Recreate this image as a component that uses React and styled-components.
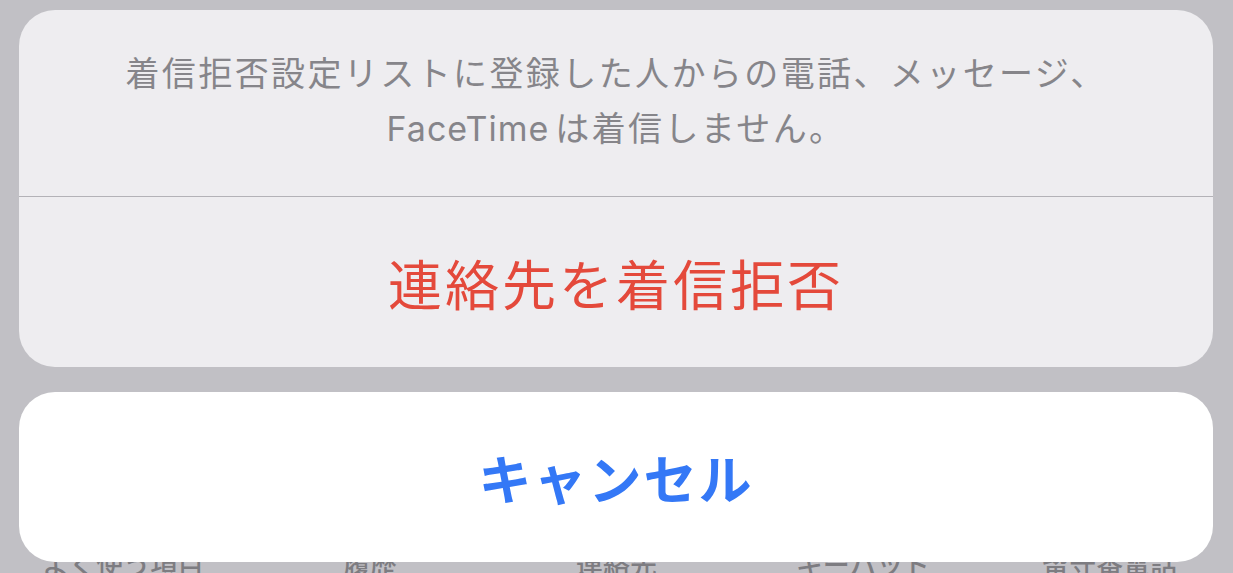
import React from 'react'
import styled, { createGlobalStyle } from 'styled-components'

const GlobalStyle = createGlobalStyle`
  html, body {
    margin: 0;
    padding: 0;
    background: #c1c0c5;
    overflow: hidden;
  }
  body {
    font-family: "Inter", "Noto Sans CJK JP", sans-serif;
  }
`

const Screen = styled.div`
  width: 1233px;
  height: 573px;
  overflow: hidden;
  display: flex;
  flex-direction: column;
`

const Sheet = styled.div`
  position: relative;
  z-index: 1;
  display: flex;
  flex-direction: column;
  gap: 25px;
  padding: 10px 20px 0 19px;
`

const Group = styled.div`
  background: #eeedf0;
  border-radius: 36px;
  display: flex;
  flex-direction: column;
  overflow: hidden;
`

const Message = styled.div`
  height: 186px;
  display: flex;
  flex-direction: column;
  align-items: center;
  justify-content: center;
  padding-bottom: 4px;
  box-sizing: border-box;
  color: #86858a;
  font-size: 34px;
  letter-spacing: 2.4px;
  line-height: 55px;
  text-align: center;
`

const Brand = styled.span`
  margin-right: 6px;
  letter-spacing: 1px;
`

const Divider = styled.div`
  height: 1px;
  background: #b3b2b7;
`

const Action = styled.button`
  height: ${p => p.$height || 170}px;
  border: 0;
  background: ${p => p.$bg || 'transparent'};
  border-radius: ${p => (p.$rounded ? '36px' : '0')};
  color: ${p => p.$color};
  font-family: "Noto Sans CJK JP", sans-serif;
  font-size: ${p => p.$size || 54}px;
  font-weight: ${p => p.$weight || 400};
  letter-spacing: ${p => p.$spacing || 3}px;
  display: flex;
  align-items: center;
  justify-content: center;
  padding: 0;
  cursor: pointer;
`

const TabBar = styled.div`
  display: grid;
  grid-template-columns: repeat(5, 1fr);
  margin-top: -14px;
`

const TabLabel = styled.span`
  text-align: center;
  color: #7d7c81;
  font-family: "Noto Sans CJK JP", sans-serif;
  font-size: 27px;
  font-weight: 500;
  line-height: 32px;
`

const tabs = ['よく使う項目', '履歴', '連絡先', 'キーパッド', '留守番電話']

export default function App() {
  return (
    <Screen>
      <GlobalStyle />
      <Sheet>
        <Group>
          <Message>
            <span>着信拒否設定リストに登録した人からの電話、メッセージ、</span>
            <span>
              <Brand>FaceTime</Brand>は着信しません。
            </span>
          </Message>
          <Divider />
          <Action $color="#e4493b">連絡先を着信拒否</Action>
        </Group>
        <Action $bg="#ffffff" $rounded $color="#3478f6" $weight={700} $size={53} $spacing={2}>
          キャンセル
        </Action>
      </Sheet>
      <TabBar>
        {tabs.map(t => (
          <TabLabel key={t}>{t}</TabLabel>
        ))}
      </TabBar>
    </Screen>
  )
}
